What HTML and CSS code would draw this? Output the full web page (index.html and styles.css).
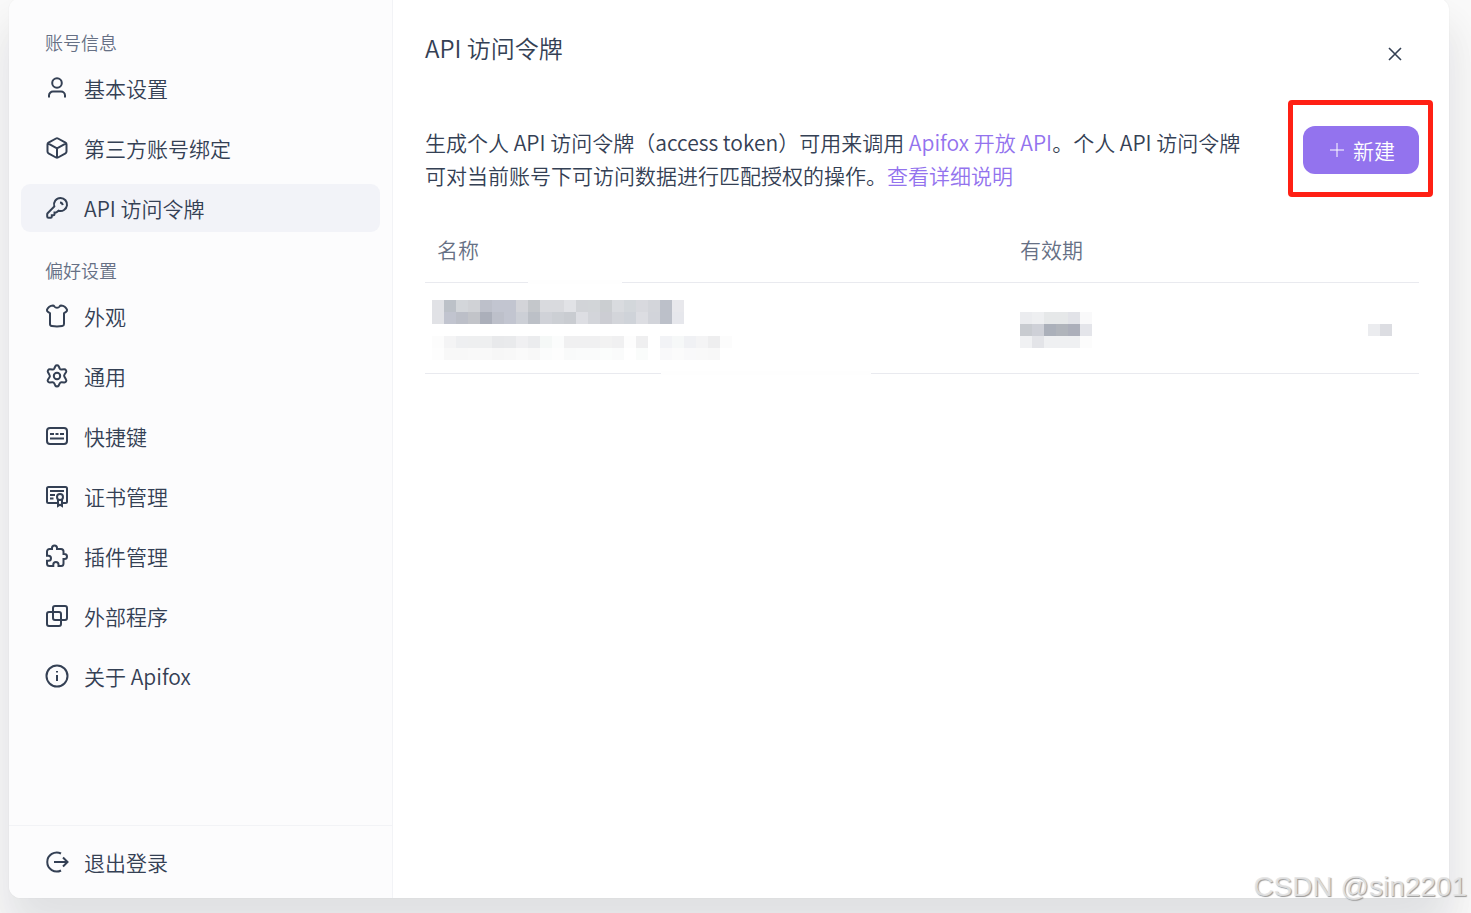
FILE: index.html
```html
<!DOCTYPE html>
<html lang="zh-CN">
<head>
    <meta charset="UTF-8">
    <meta name="viewport" content="width=device-width, initial-scale=1.0">
    <title>API 访问令牌</title>
    <link rel="stylesheet" href="styles.css">
</head>
<body>
    <div class="modal">
        <aside class="sidebar">
            <nav class="menu">
                <h2 class="menu-title">账号信息</h2>
                <a class="menu-item" href="#profile">
                    <svg class="icon" viewBox="0 0 24 24"><circle cx="12" cy="7" r="4.800"/><path d="M4 21.500v-2a4 4 0 0 1 4-4h8a4 4 0 0 1 4 4v2"/></svg>
                    基本设置
                </a>
                <a class="menu-item" href="#bindings">
                    <svg class="icon" viewBox="0 0 24 24"><path d="M11 2.500a2 2 0 0 1 2 0l7.500 4.200a2 2 0 0 1 1 1.700v7.200a2 2 0 0 1-1 1.700L13 21.500a2 2 0 0 1-2 0l-7.500-4.200a2 2 0 0 1-1-1.700V8.400a2 2 0 0 1 1-1.700zM3 7.400l9 4.900 9-4.900M12 12.300v9.400"/></svg>
                    第三方账号绑定
                </a>
                <a class="menu-item active" href="#tokens">
                    <svg class="icon" viewBox="0 0 24 24"><path d="M15.500 2a6.500 6.500 0 0 0-6.200 8.500L2.600 17.200a1.500 1.500 0 0 0-.4 1V20.500a1.300 1.300 0 0 0 1.300 1.300h2.300a1 1 0 0 0 1-1V19.200h1.700a1 1 0 0 0 1-1v-1.700h1.400a1.500 1.500 0 0 0 1-.4L13.600 14.700A6.500 6.500 0 1 0 15.500 2zM15 6.500a3 3 0 0 1 2.700 2.700"/></svg>
                    API 访问令牌
                </a>
                <h2 class="menu-title">偏好设置</h2>
                <a class="menu-item" href="#appearance">
                    <svg class="icon" viewBox="0 0 24 24"><path d="M8 1.500c.8 0 1 .4 1.400 1a3.200 3.200 0 0 0 5.200 0c.4-.6.6-1 1.400-1 3 .3 5 1.800 6 4.200.3 1-.1 1.600-1 2.200l-2 1.300V20c0 1.200-.6 1.900-1.800 2.100a34 34 0 0 1-10.400 0C5.600 21.900 5 21.200 5 20V9.200L3 7.900C2.100 7.300 1.700 6.700 2 5.700 3 3.300 5 1.800 8 1.500z"/></svg>
                    外观
                </a>
                <a class="menu-item" href="#general">
                    <svg class="icon" viewBox="0 0 24 24"><circle cx="12" cy="12" r="3.200"/><path d="M10.300 2.300a2 2 0 0 1 3.400 0l1 2.200a2 2 0 0 0 2 1.100l2.400-.3a2 2 0 0 1 1.900 3l-1.500 2.200a2 2 0 0 0 0 2.300L21 15.500a2 2 0 0 1-1.800 3.100l-2.500-.3a2 2 0 0 0-2 1.100l-1 2.200a2 2 0 0 1-3.400 0l-1-2.200a2 2 0 0 0-2-1.100l-2.500.3A2 2 0 0 1 3 15.500l1.500-2.200a2 2 0 0 0 0-2.300L3 8.300a2 2 0 0 1 1.900-3l2.400.3a2 2 0 0 0 2-1.100z"/></svg>
                    通用
                </a>
                <a class="menu-item" href="#shortcuts">
                    <svg class="icon" viewBox="0 0 24 24"><rect x="2" y="4" width="20" height="16" rx="3"/><path d="M5 10h4M10.500 10h3M15 10h4M5 14.500h14"/></svg>
                    快捷键
                </a>
                <a class="menu-item" href="#certificates">
                    <svg class="icon" viewBox="0 0 24 24"><path d="M12.500 19H3.500A1.500 1.500 0 0 1 2 17.500v-13A1.500 1.500 0 0 1 3.500 3h17A1.500 1.500 0 0 1 22 4.500v13a1.500 1.500 0 0 1-1.500 1.500H18M5 7h14M5 11h5M5 14.500h3.500"/><circle cx="15" cy="13" r="3"/><path d="M13 15.500V22l2-1.300 2 1.300v-6.500"/></svg>
                    证书管理
                </a>
                <a class="menu-item" href="#plugins">
                    <svg class="icon" viewBox="0 0 24 24"><path d="M7 5V4a2.500 2.500 0 0 1 5 0v1h4a2.500 2.500 0 0 1 2.500 2.500V10h1a2.500 2.500 0 0 1 0 5h-1v4.500A2.500 2.500 0 0 1 16 22h-2.500v-1.500a2.600 2.600 0 0 0-5.200 0V22H4.500A2.500 2.500 0 0 1 2 19.500v-2.800h1.500a2.500 2.500 0 0 0 0-5H2V7.500A2.500 2.500 0 0 1 4.500 5z"/></svg>
                    插件管理
                </a>
                <a class="menu-item" href="#programs">
                    <svg class="icon" viewBox="0 0 24 24"><rect x="8" y="2" width="14" height="14" rx="2"/><rect x="2" y="8" width="14" height="14" rx="2"/></svg>
                    外部程序
                </a>
                <a class="menu-item" href="#about">
                    <svg class="icon" viewBox="0 0 24 24"><circle cx="12" cy="12" r="10.500"/><path d="M12 11v6M12 7v1.500"/></svg>
                    关于 Apifox
                </a>
            </nav>
            <div class="logout">
                <a class="menu-item" href="#logout">
                    <svg class="icon" viewBox="0 0 24 24"><path d="M16 3.500A9.500 9.500 0 1 0 16 20.500M9 12h13.500M18 7.500l4.500 4.500-4.500 4.500"/></svg>
                    退出登录
                </a>
            </div>
        </aside>

        <main class="content">
            <header class="content-header">
                <h1>API 访问令牌</h1>
                <button class="close-btn" type="button" aria-label="关闭">
                    <svg viewBox="0 0 14 14"><path d="M1 1l12 12M13 1L1 13"/></svg>
                </button>
            </header>

            <section class="intro">
                <p>生成个人 API 访问令牌（access token）可用来调用 <a href="#open-api">Apifox 开放 API</a>。个人 API 访问令牌可对当前账号下可访问数据进行匹配授权的操作。<a href="#docs">查看详细说明</a></p>
                <div class="highlight">
                    <button class="create-btn" type="button">
                        <svg viewBox="0 0 14 14"><path d="M7 0v14M0 7h14"/></svg>
                        新建
                    </button>
                </div>
            </section>

            <table class="token-table">
                <thead>
                    <tr>
                        <th class="col-name">名称</th>
                        <th class="col-expire">有效期</th>
                        <th class="col-action"></th>
                    </tr>
                </thead>
                <tbody>
                    <tr>
                        <td class="col-name"><svg class="mosaic" id="maskName" width="300" height="60"></svg></td>
                        <td class="col-expire"><svg class="mosaic" id="maskExpire" width="72" height="36"></svg></td>
                        <td class="col-action"><svg class="mosaic" id="maskAction" width="24" height="12"></svg></td>
                    </tr>
                </tbody>
            </table>
        </main>
    </div>
    <div class="watermark">CSDN @sin2201</div>

    <script src="script.js"></script>
</body>
</html>
```
FILE: styles.css
```css
* {
    box-sizing: border-box;
}
body {
    margin: 0;
    height: 100vh;
    overflow: hidden;
    background-color: #f9f9f9;
    color: #344054;
    font-family: "Noto Sans CJK SC", sans-serif;
    font-size: 21px;
    font-weight: 350;
}
a {
    color: #9373ee;
    text-decoration: none;
}
button {
    border: none;
    padding: 0;
    font: inherit;
    cursor: pointer;
}
svg {
    display: block;
    fill: none;
    stroke: currentColor;
}
.modal {
    display: flex;
    height: calc(100vh - 13px);
    margin: -2px 22px 0 9px;
    border-radius: 12px;
    background-color: #fff;
    box-shadow: 0 0 2px rgba(16,24,40,0.06), 0 30px 48px rgba(16,24,40,0.07), 0 30px 36px 6px rgba(16,24,40,0.04);
    overflow: hidden;
}

/* Menú lateral */
.sidebar {
    display: flex;
    flex-direction: column;
    flex: 0 0 384px;
    border-right: 1px solid #f2f3f6;
    background-color: #fcfcfd;
}
.menu {
    display: flex;
    flex-direction: column;
    flex: 1;
    gap: 12px;
    padding: 30px 12px 0;
}
.menu-title {
    height: 24px;
    margin: 0;
    padding-left: 24px;
    color: #667085;
    font-size: 18px;
    font-weight: 350;
    line-height: 28px;
}
.menu-item + .menu-title {
    margin-top: 12px;
}
.menu-item {
    display: flex;
    align-items: center;
    gap: 15px;
    height: 48px;
    padding: 0 24px;
    border-radius: 9px;
    color: #344054;
}
.menu-item.active {
    background-color: #f2f3f8;
}
.icon {
    width: 24px;
    height: 24px;
    stroke-width: 2;
}
.logout {
    padding: 12px;
    border-top: 1px solid #f2f3f6;
}

/* Contenido */
.content {
    flex: 1;
    padding: 30px 30px 0 32px;
}
.content-header {
    display: flex;
    justify-content: space-between;
}
h1 {
    margin: 0;
    font-size: 24px;
    font-weight: 350;
    line-height: 40px;
}
.close-btn {
    width: 24px;
    height: 24px;
    margin: 14px 12px 0 0;
    padding: 5px;
    background: none;
    color: #344054;
}
.close-btn svg {
    stroke-width: 1.6;
}
.intro {
    display: flex;
    align-items: flex-start;
    gap: 60px;
    margin-top: 58px;
}
.intro p {
    flex: 1;
    margin: 0;
    line-height: 33px;
}
.highlight {
    position: relative;
}
.highlight::after {
    content: "";
    position: absolute;
    inset: -26px -14px -23px -15px;
    border: 5px solid #ff2014;
    border-radius: 4px;
    pointer-events: none;
}
.create-btn {
    display: flex;
    align-items: center;
    justify-content: center;
    gap: 9px;
    width: 116px;
    height: 48px;
    padding-left: 3px;
    border-radius: 12px;
    background-color: #9373ee;
    color: #fff;
}
.create-btn svg {
    width: 14px;
    height: 14px;
}
.token-table {
    width: 100%;
    margin-top: 26px;
    border-collapse: collapse;
    table-layout: fixed;
}
.token-table th {
    position: relative;
    height: 64px;
    padding: 0 12px 2px;
    border-bottom: 1px solid #e9eaef;
    color: #667085;
    font-weight: 350;
    text-align: left;
}
.token-table td {
    position: relative;
    height: 91px;
    padding: 4px 12px 0;
    border-bottom: 1px solid #e9eaef;
}
.token-table .col-name {
    width: auto;
}
.token-table .col-expire {
    width: 300px;
}
.token-table .col-action {
    width: 111px;
}
.token-table td.col-name {
    padding-left: 7px;
}
.token-table td.col-action {
    padding-right: 27px;
}
.col-action .mosaic {
    margin-left: auto;
}
/* Zonas borradas de las líneas */
.col-name::after {
    content: "";
    position: absolute;
    bottom: -2px;
    height: 4px;
    background-color: #fefefe;
}
th.col-name::after {
    left: 103px;
    width: 94px;
}
td.col-name::after {
    left: 236px;
    width: 210px;
}
.mosaic {
    stroke: none;
    shape-rendering: crispEdges;
}
.watermark {
    position: absolute;
    right: 4px;
    bottom: 8px;
    color: rgba(228,228,228,0.9);
    font-family: "Liberation Sans", Arial, sans-serif;
    font-size: 28px;
    font-weight: 400;
    line-height: 36px;
    text-shadow: 1px 1px 1px #999;
}
```
FILE: script.js
```js
const CELL = 12;

// Colores de cada celda, fila por fila
const masks = {
    maskName: [
        'e1e2e6 bcc1c8 d3d6da d0d2d6 bdc0ca c2c5d0 c2c5d0 d3d4d9 c4c7cb d9dade d9dade e1e2e6 d2d4d8 d2d5d8 cbced1 d9dbdf d3d7db d8d9de d3d5da bcc0c9 e8e8ec',
        'e1e2e6 c1c4cf bcbfc8 c2c4c9 abafba bdc0ca c2c5d0 cccfd6 bcc0c7 d0d2d8 cccfd4 c9ccd1 dddee3 d3d5da cccdd3 d3d5da cfd3d9 dcdde2 d2d4da bcc0c9 e6e7ec',
        '',
        'fcfcfc f4f4f5 eeeff1 eeeff0 eeeff0 e8e9eb e9eaec f0f0f2 ebecee f5f8f7 fbfcfc f0f0f1 f0f0f1 f0f0f1 f2f2f2 f0f0f1 fdfdfd efeff0 ffffff f2f3f6 f6f8f8 f0f1f4 f4f4f5 eeeeef fcfcfc',
        'fdfdfd f8f8f8 f8f8f8 f9f9f9 f9f9f9 f7f7f7 f8f8f8 fafafa f8f8f8 fbfcfc fdfdfd f9fafa fafbfb fafbfb fbfdfc fafbfb ffffff fafcfb ffffff f9f9fa fbfbfb f9f9fa f9f9f9 f8f8f8'
    ],
    maskExpire: [
        'ebecef eeeff1 e6e8e9 e6e8e9 e2e3e8 f9f9fa',
        'c8cbd0 ced0d7 abb0ba b0b4bb acafba e4e5ea',
        'f0f1f3 e3e4e8 eff0f2 eff0f2 eff0f2 fcfcfc'
    ],
    maskAction: ['ebecef dcdde2']
};

Object.keys(masks).forEach(id => {
    const svg = document.getElementById(id);
    masks[id].forEach((row, y) => {
        row.split(' ').filter(Boolean).forEach((color, x) => {
            const rect = document.createElementNS('http://www.w3.org/2000/svg', 'rect');
            rect.setAttribute('x', x * CELL);
            rect.setAttribute('y', y * CELL);
            rect.setAttribute('width', CELL);
            rect.setAttribute('height', CELL);
            rect.setAttribute('fill', '#' + color);
            svg.appendChild(rect);
        });
    });
});
```
